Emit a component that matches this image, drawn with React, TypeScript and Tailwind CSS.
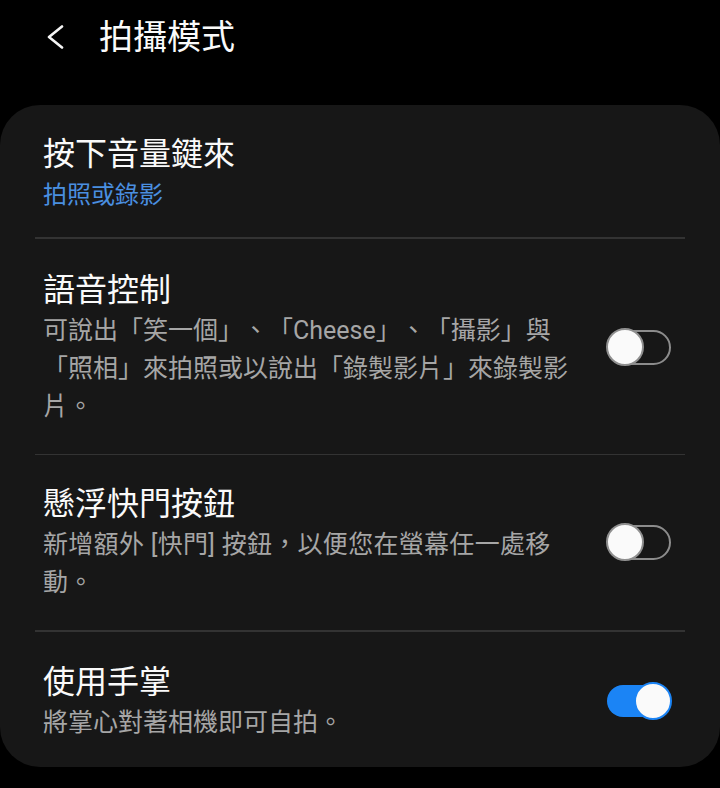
import React from "react";

const FONT = { fontFamily: '"Roboto", "Noto Sans CJK TC", "Noto Sans CJK SC", sans-serif' };

function Toggle({ on }: { on: boolean }) {
  return (
    <div className="relative w-[66px] h-[38px] shrink-0">
      {on ? (
        <>
          <div className="absolute left-[1px] top-[3px] w-[64px] h-[32px] rounded-full bg-[#1b84f5]" />
          <div className="absolute right-0 top-0 w-[38px] h-[38px] rounded-full bg-[#fafafa] border-2 border-[#1b84f5]" />
        </>
      ) : (
        <>
          <div className="absolute left-[1px] top-[2px] w-[64px] h-[35px] rounded-full border-2 border-[#8c8c8c]" />
          <div className="absolute left-0 top-0 w-[38px] h-[38px] rounded-full bg-[#fafafa] border-2 border-[#8f8f8f]" />
        </>
      )}
    </div>
  );
}

function Divider() {
  return <div className="mx-[35px] h-[2px] bg-[#333333]" />;
}

export default function App() {
  return (
    <div className="w-[720px] h-[788px] bg-black overflow-hidden [text-spacing-trim:space-all]" style={FONT}>
      {/* header */}
      <div className="h-[105px] flex items-start">
        <div className="flex items-center h-[74px] pl-[46px]">
          <svg width="18" height="24" viewBox="0 0 18 24" className="shrink-0">
            <polyline points="16,1.5 3,12 16,22.5" fill="none" stroke="#f5f5f5" strokeWidth="2.6" strokeLinecap="round" strokeLinejoin="round" />
          </svg>
          <div className="ml-[35px] text-[34px] leading-[40px] text-[#fafafa]">拍攝模式</div>
        </div>
      </div>

      {/* card */}
      <div className="bg-[#171717] rounded-[40px] h-[662px] flex flex-col">
        {/* row 1 */}
        <div className="pl-[43px] pr-[48px] pt-[27px] pb-[23px]">
          <div className="text-[32px] leading-[44px] text-[#fafafa]">按下音量鍵來</div>
          <div className="text-[24px] leading-[38px] text-[#4a8fe0]">拍照或錄影</div>
        </div>
        <Divider />
        {/* row 2 */}
        <div className="flex items-center pl-[43px] pr-[48px] pt-[29px] pb-[28px]">
          <div className="flex-1">
            <div className="text-[32px] leading-[44px] text-[#fafafa]">語音控制</div>
            <div className="text-[25px] leading-[38px] text-[#a6a6a6] whitespace-nowrap">
              可說出「笑一個」、「Cheese」、「攝影」與
              <br />
              「照相」來拍照或以說出「錄製影片」來錄製影
              <br />
              片。
            </div>
          </div>
          <Toggle on={false} />
        </div>
        <Divider />
        {/* row 3 */}
        <div className="flex items-center pl-[43px] pr-[48px] pt-[27px] pb-[28px]">
          <div className="flex-1">
            <div className="text-[32px] leading-[44px] text-[#fafafa]">懸浮快門按鈕</div>
            <div className="text-[25px] leading-[38px] text-[#a6a6a6] whitespace-nowrap tracking-[0.3px]">
              新增額外 [快門] 按鈕，以便您在螢幕任一處移
              <br />
              動。
            </div>
          </div>
          <Toggle on={false} />
        </div>
        <Divider />
        {/* row 4 */}
        <div className="flex items-center pl-[43px] pr-[48px] pt-[28px] pb-[25px]">
          <div className="flex-1">
            <div className="text-[32px] leading-[44px] text-[#fafafa]">使用手掌</div>
            <div className="text-[25px] leading-[38px] text-[#a6a6a6] whitespace-nowrap">將掌心對著相機即可自拍。</div>
          </div>
          <Toggle on={true} />
        </div>
      </div>
    </div>
  );
}
